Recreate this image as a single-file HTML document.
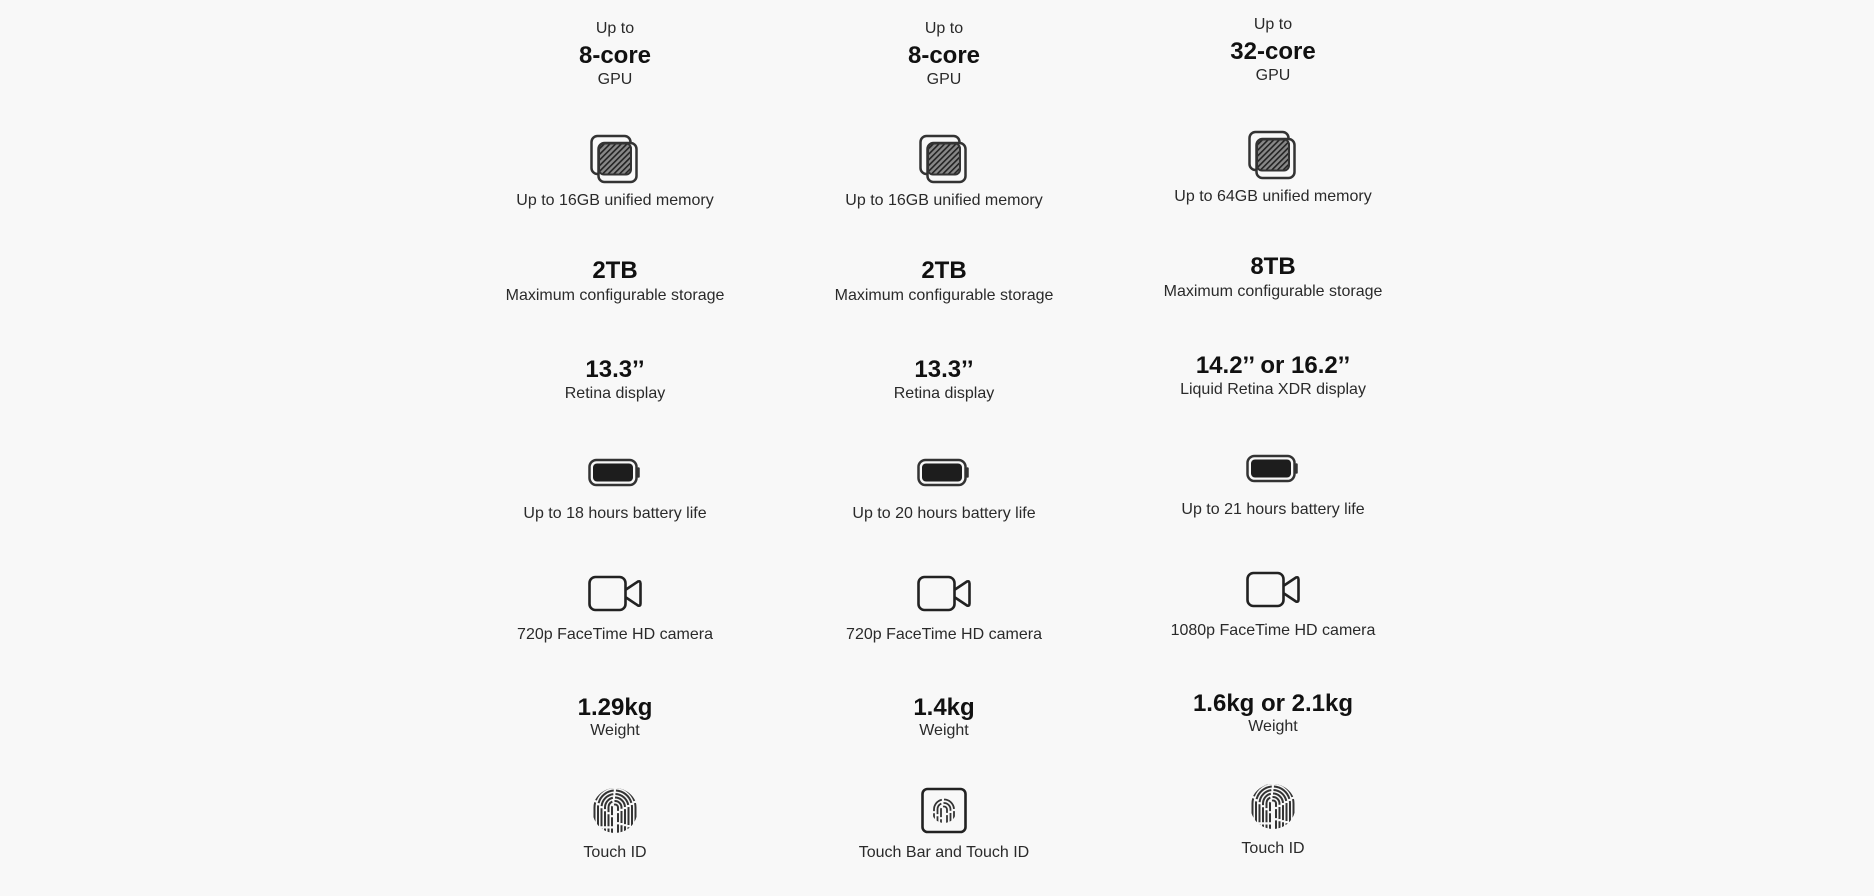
<!DOCTYPE html>
<html><head><meta charset="utf-8"><style>
html,body{margin:0;padding:0}
body{width:1874px;height:896px;background:#f8f8f8;position:relative;overflow:hidden;font-family:"Liberation Sans",Arial,sans-serif;color:#1d1d1f}
.t{position:absolute;transform:translate(-50%,-50%);white-space:nowrap;font-size:16px;line-height:20px;color:#2a2a2a}
.b{font-size:24px;font-weight:bold;line-height:28px;color:#111}
.i{position:absolute;transform:translate(-50%,-50%)}
</style></head><body>
<svg width="0" height="0" style="position:absolute"><defs>
<pattern id="h" width="4" height="4" patternUnits="userSpaceOnUse" patternTransform="rotate(45)"><rect width="4" height="4" fill="#888"/><rect width="1.6" height="4" fill="#222"/></pattern>
</defs></svg>
<div id="c"></div>
<script>
var cols=[
{x:615,dy:0,a:["Up to","8-core","GPU","Up to 16GB unified memory","2TB","Maximum configurable storage","13.3’’","Retina display","Up to 18 hours battery life","720p FaceTime HD camera","1.29kg","Weight","Touch ID"],tb:false},
{x:944,dy:0,a:["Up to","8-core","GPU","Up to 16GB unified memory","2TB","Maximum configurable storage","13.3’’","Retina display","Up to 20 hours battery life","720p FaceTime HD camera","1.4kg","Weight","Touch Bar and Touch ID"],tb:true},
{x:1273,dy:-4,a:["Up to","32-core","GPU","Up to 64GB unified memory","8TB","Maximum configurable storage","14.2’’ or 16.2’’","Liquid Retina XDR display","Up to 21 hours battery life","1080p FaceTime HD camera","1.6kg or 2.1kg","Weight","Touch ID"],tb:false}];
var ys=[29,56,80,201,271,296,370,394,514,635,708,731,853];
var bold=[1,4,6,10];
var mem='<svg width="48" height="50" viewBox="0 0 48 50"><rect x="1.5" y="1.5" width="39" height="38" rx="6" fill="none" stroke="#333" stroke-width="2.5"/><rect x="8.5" y="8.5" width="38" height="39" rx="6" fill="#f8f8f8" stroke="#333" stroke-width="2.5"/><rect x="9" y="9" width="32" height="31" rx="5" fill="url(#h)" stroke="#333" stroke-width="2"/></svg>';
var bat='<svg width="54" height="28" viewBox="0 0 54 28"><rect x="1.5" y="1.5" width="47" height="25" rx="7" fill="none" stroke="#333" stroke-width="2.5"/><rect x="5" y="5" width="40" height="18" rx="4" fill="#1d1d1d"/><path d="M50.5 10v8" stroke="#333" stroke-width="2.5" stroke-linecap="round"/></svg>';
var cam='<svg width="54" height="36" viewBox="0 0 54 36"><rect x="1.5" y="1.5" width="36" height="33" rx="6" fill="none" stroke="#222" stroke-width="2.6"/><path d="M38 14 L50 6 Q52.5 5 52.5 8 L52.5 28 Q52.5 31 50 30 L38 22" fill="none" stroke="#222" stroke-width="2.6" stroke-linejoin="round"/></svg>';
function fp(w,rs){var p='';for(var k=0;k<rs.length;k++){var r=rs[k];p+='<path d="M'+(-r)+' 30 L'+(-r)+' 0 A'+r+' '+r+' 0 0 1 '+r+' 0 L'+r+' 30" fill="none" stroke="#333" stroke-width="'+w+'" stroke-dasharray="'+(9+k*3)+' 2.2" stroke-dashoffset="'+(k*3)+'"/>';}return p;}
var touch='<svg width="48" height="48" viewBox="-24 -24 48 48"><clipPath id="cc"><circle r="22.5"/></clipPath><g clip-path="url(#cc)"><g transform="translate(0,-3)">'+fp(2,[3,6.5,10,13.5,17,20.5,24])+'</g></g></svg>';
var tbar='<svg width="46" height="46" viewBox="0 0 46 46"><rect x="1.5" y="1.5" width="43" height="43" rx="5" fill="none" stroke="#222" stroke-width="2.6"/><clipPath id="cd"><circle cx="23" cy="23" r="12.5"/></clipPath><g clip-path="url(#cd)"><g transform="translate(23,22)">'+fp(1.8,[3,6.5,10,13.5])+'</g></g></svg>';
var h='';
cols.forEach(function(c){
 c.a.forEach(function(s,i){h+='<div class="t'+(bold.indexOf(i)>=0?' b':'')+'" style="left:'+c.x+'px;top:'+(ys[i]+c.dy)+'px">'+s+'</div>';});
 h+='<div class="i" style="left:'+(c.x-1)+'px;top:'+(162+c.dy)+'px">'+mem+'</div>';
 h+='<div class="i" style="left:'+c.x+'px;top:'+(475+c.dy)+'px">'+bat+'</div>';
 h+='<div class="i" style="left:'+c.x+'px;top:'+(596+c.dy)+'px">'+cam+'</div>';
 h+='<div class="i" style="left:'+c.x+'px;top:'+(813+c.dy)+'px">'+(c.tb?tbar:touch)+'</div>';
});
document.getElementById('c').innerHTML=h;
</script>
</body></html>
